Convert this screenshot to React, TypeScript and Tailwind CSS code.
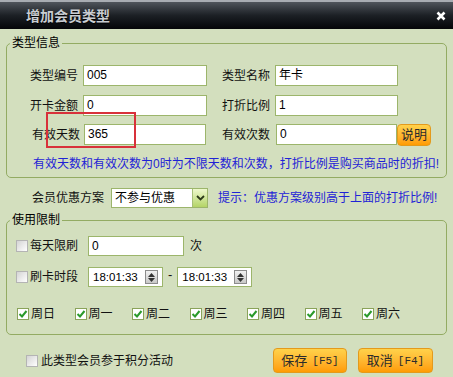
import React from "react";

function Input({ className, value }: { className: string; value: string }) {
  return (
    <div className={`border border-[#9cb56b] bg-white pl-[3px] text-[12px] text-black ${className}`}>
      {value}
    </div>
  );
}

function Box({ checked }: { checked?: boolean }) {
  if (checked) {
    return (
      <div className="flex h-[12px] w-[12px] shrink-0 items-center justify-center border border-[#8aa35a] bg-white">
        <svg width="10" height="10" viewBox="0 0 10 10">
          <polyline points="1.5,5 4,7.5 8.5,2" fill="none" stroke="#2a9a2a" strokeWidth="2" />
        </svg>
      </div>
    );
  }
  return (
    <div className="h-[12px] w-[12px] shrink-0 border border-[#b4b4b4] bg-gradient-to-br from-[#d4d4d4] to-white" />
  );
}

function Spin() {
  return (
    <div className="flex h-[14px] w-[13px] flex-col items-center justify-center gap-[1px] border border-[#8c8c8c] bg-gradient-to-b from-[#f2f2f2] to-[#c8c8c8]">
      <svg width="7" height="4" viewBox="0 0 7 4">
        <polygon points="0,4 3.5,0 7,4" fill="#333" />
      </svg>
      <svg width="7" height="4" viewBox="0 0 7 4">
        <polygon points="0,0 7,0 3.5,4" fill="#333" />
      </svg>
    </div>
  );
}

function Time() {
  return (
    <div className="flex h-[20px] w-[75px] items-center justify-between border border-[#9cb56b] bg-white pl-[4px] pr-[4px] text-[11.5px] text-black">
      <span>18:01:33</span>
      <Spin />
    </div>
  );
}

function OrangeBtn({ className, cn, key2 }: { className: string; cn: string; key2: string }) {
  return (
    <div
      className={`flex items-center justify-center rounded-[4px] border border-[#e39a1c] bg-gradient-to-b from-[#ffd24a] to-[#ff9c00] text-[#2b2b2b] ${className}`}
    >
      <span className="text-[13px]">{cn}</span>
      {key2 && <span className="ml-[5px] font-['Liberation_Mono',monospace] text-[11px]">{key2}</span>}
    </div>
  );
}

const days = ["周日", "周一", "周二", "周三", "周四", "周五", "周六"];

export default function App() {
  return (
    <div className="relative h-[377px] w-[453px] overflow-hidden bg-[#d3dfbe] font-['Liberation_Sans','Noto_Sans_CJK_SC',sans-serif] text-[12px] leading-[14px] text-[#111]">
      {/* title bar */}
      <div className="flex h-[29px] items-center justify-between border-t-[2px] border-[#a8acb2] bg-gradient-to-b from-[#50555c] via-[#1c2025] to-[#050608] pl-[26px] pr-[6px]">
        <span className="text-[14px] font-bold text-[#c9cdd2] [text-shadow:0_1px_1px_#000]">增加会员类型</span>
        <svg width="10" height="10" viewBox="0 0 10 10" className="mr-[1px]">
          <path d="M1.5 1.5 L8.5 8.5 M8.5 1.5 L1.5 8.5" stroke="#fff" strokeWidth="2.6" />
        </svg>
      </div>

      {/* 类型信息 */}
      <fieldset className="mx-[6px] mt-[7px] rounded-[5px] border border-[#93ab63] px-[3px] pb-[6px] pt-[15px]">
        <legend className="px-[2px] leading-[14px] text-black">类型信息</legend>
        <div className="flex h-[21px] items-center pl-[20px]">
          <span className="w-[53px]">类型编号</span>
          <Input className="h-[21px] w-[124px] leading-[19px]" value="005" />
          <span className="ml-[15px] w-[53px]">类型名称</span>
          <Input className="h-[21px] w-[123px] leading-[19px]" value="年卡" />
        </div>
        <div className="mt-[9px] flex h-[21px] items-center pl-[20px]">
          <span className="w-[53px]">开卡金额</span>
          <Input className="h-[21px] w-[124px] leading-[19px]" value="0" />
          <span className="ml-[15px] w-[53px]">打折比例</span>
          <Input className="h-[21px] w-[123px] leading-[19px]" value="1" />
        </div>
        <div className="mt-[8px] flex h-[21px] items-center pl-[22px]">
          <span className="w-[52px]">有效天数</span>
          <Input className="h-[21px] w-[122px] leading-[19px]" value="365" />
          <span className="ml-[16px] w-[54px]">有效次数</span>
          <Input className="h-[21px] w-[121px] leading-[19px]" value="0" />
          <OrangeBtn className="h-[22px] w-[34px]" cn="说明" key2="" />
        </div>
        <div className="mt-[12px] pl-[23px] text-[12px] text-[#1f23d6]">
          有效天数和有效次数为0时为不限天数和次数，打折比例是购买商品时的折扣!
        </div>
      </fieldset>

      {/* 会员优惠方案 */}
      <div className="mt-[10px] flex h-[20px] items-center pl-[32px]">
        <span className="w-[79px]">会员优惠方案</span>
        <div className="flex h-[20px] w-[97px] items-center justify-between border border-[#9cb56b] bg-white pl-[3px]">
          <span className="text-black">不参与优惠</span>
          <div className="flex h-[18px] w-[15px] items-center justify-center border-l border-[#a6be78] bg-gradient-to-b from-[#eef8cc] to-[#b4d466]">
            <svg width="9" height="6" viewBox="0 0 9 6">
              <polyline points="1,1 4.5,4.5 8,1" fill="none" stroke="#2d3a1a" strokeWidth="1.8" />
            </svg>
          </div>
        </div>
        <span className="ml-[10px] text-[#1f23d6]">提示：优惠方案级别高于上面的打折比例!</span>
      </div>

      {/* 使用限制 */}
      <fieldset className="mx-[6px] mt-[5px] w-[441px] rounded-[5px] border border-[#93ab63] px-[3px] pb-[13px] pt-[9px]">
        <legend className="px-[2px] leading-[14px] text-black">使用限制</legend>
        <div className="flex h-[20px] items-center pl-[6px]">
          <Box />
          <span className="ml-[2px] w-[58px]">每天限刷</span>
          <Input className="h-[20px] w-[96px] leading-[18px]" value="0" />
          <span className="ml-[6px]">次</span>
        </div>
        <div className="mt-[11px] flex h-[20px] items-center pl-[6px]">
          <Box />
          <span className="ml-[2px] w-[58px]">刷卡时段</span>
          <Time />
          <span className="mx-[5px] -mt-[4px] text-[13px]">-</span>
          <Time />
        </div>
        <div className="mt-[20px] flex h-[14px] items-center pl-[7px]">
          {days.map((d) => (
            <div key={d} className="flex w-[57.5px] shrink-0 items-center">
              <Box checked />
              <span className="ml-[2px]">{d}</span>
            </div>
          ))}
        </div>
      </fieldset>

      {/* bottom */}
      <div className="mt-[13px] flex h-[25px] items-center pl-[26px]">
        <Box />
        <span className="ml-[3px]">此类型会员参于积分活动</span>
        <OrangeBtn className="ml-[100px] h-[25px] w-[74px]" cn="保存" key2="[F5]" />
        <OrangeBtn className="ml-[11px] h-[25px] w-[75px]" cn="取消" key2="[F4]" />
      </div>

      {/* red annotation */}
      <div className="absolute left-[46px] top-[112px] h-[36px] w-[90px] border-2 border-[#d8313a]" />
    </div>
  );
}
